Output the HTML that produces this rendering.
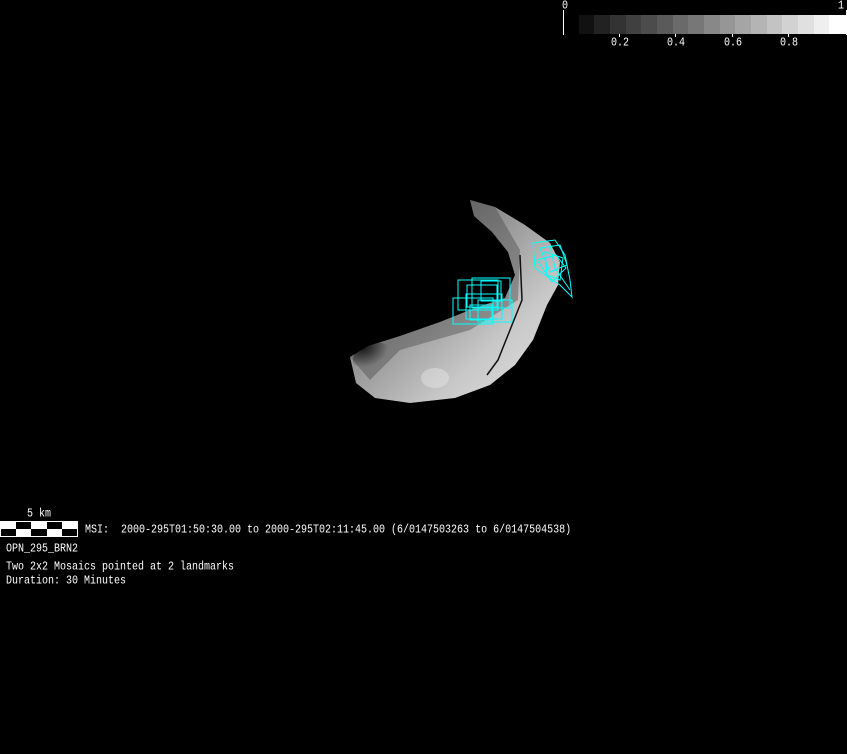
<!DOCTYPE html>
<html><head><style>
body{margin:0;background:#000;width:847px;height:754px;overflow:hidden;position:relative;font-family:"Liberation Mono",monospace;color:#fff}
.t{position:absolute;font-size:10px;white-space:pre;line-height:12px;transform:scaleY(1.2);transform-origin:0 0}
</style></head><body>
<svg width="847" height="754" style="position:absolute;left:0;top:0">
<defs>
<linearGradient id="g" x1="0" y1="0" x2="1" y2="1">
<stop offset="0" stop-color="#444"/><stop offset="0.35" stop-color="#888"/><stop offset="0.7" stop-color="#c8c8c8"/><stop offset="1" stop-color="#e6e6e6"/>
</linearGradient>
<radialGradient id="d" cx="0.2" cy="0.1" r="0.6"><stop offset="0" stop-color="#000" stop-opacity="0.9"/><stop offset="1" stop-color="#000" stop-opacity="0"/></radialGradient>
</defs>
<path d="M470,200 L495,207 L525,225 L550,243 L560,262 L558,285 L547,305 L533,340 L515,365 L490,385 L455,398 L410,403 L375,398 L356,383 L350,357 L368,346 L400,336 L440,322 L475,308 L505,298 L515,275 L508,252 L492,232 L474,216 Z" fill="url(#g)"/>
<path d="M350,357 L368,346 L400,336 L440,322 L475,308 L505,298 L515,275 L508,252 L492,232 L474,216 L470,200 L495,207 L520,250 L518,300 L470,330 L400,350 L370,380 Z" fill="#444" opacity="0.4"/>
<ellipse cx="375" cy="360" rx="22" ry="18" fill="url(#d)"/>
<ellipse cx="435" cy="378" rx="14" ry="10" fill="#eee" opacity="0.4"/>
<path d="M520,255 L522,300 L510,330 L498,360 L487,375" stroke="#111" stroke-width="1.5" fill="none"/>
<g stroke="#0ff" stroke-width="1" fill="none">
<rect x="458" y="280" width="40" height="30"/><rect x="453" y="298" width="40" height="26"/><rect x="472" y="278" width="38" height="30"/>
<rect x="466" y="294" width="36" height="25"/><rect x="478" y="300" width="34" height="22"/><rect x="467" y="285" width="30" height="22"/>
<rect x="481" y="281" width="20" height="20"/><rect x="470" y="305" width="22" height="15"/>
<path d="M533,243 L555,240 L565,255 L570,280 L572,297 L560,285 L545,275 L535,268 Z"/>
<path d="M540,248 L560,245 L567,265 L550,272 Z"/><path d="M545,252 L563,258 L560,280 L547,275 Z"/>
<path d="M537,260 L556,255 L566,268 L552,282 Z"/><path d="M550,245 L555,268 L570,290"/>
</g>
<g fill="none" stroke="#fff"><line x1="563.5" y1="10" x2="563.5" y2="35"/><line x1="846.5" y1="10" x2="846.5" y2="35"/></g>
<g shape-rendering="crispEdges">
<rect x="579" y="15" width="16" height="19" fill="#111"/><rect x="594" y="15" width="16" height="19" fill="#222"/><rect x="610" y="15" width="16" height="19" fill="#333"/>
<rect x="626" y="15" width="16" height="19" fill="#404040"/><rect x="641" y="15" width="16" height="19" fill="#4c4c4c"/><rect x="657" y="15" width="16" height="19" fill="#5a5a5a"/>
<rect x="673" y="15" width="16" height="19" fill="#6a6a6a"/><rect x="688" y="15" width="16" height="19" fill="#777"/><rect x="704" y="15" width="16" height="19" fill="#888"/>
<rect x="720" y="15" width="16" height="19" fill="#969696"/><rect x="735" y="15" width="16" height="19" fill="#a5a5a5"/><rect x="751" y="15" width="16" height="19" fill="#b4b4b4"/>
<rect x="767" y="15" width="16" height="19" fill="#c3c3c3"/><rect x="782" y="15" width="16" height="19" fill="#d2d2d2"/><rect x="798" y="15" width="16" height="19" fill="#e0e0e0"/>
<rect x="814" y="15" width="16" height="19" fill="#efefef"/><rect x="829" y="15" width="17" height="19" fill="#fff"/>
<g fill="#fff"><rect x="619" y="34" width="1" height="3"/><rect x="675" y="34" width="1" height="3"/><rect x="732" y="34" width="1" height="3"/><rect x="788" y="34" width="1" height="3"/></g>
<rect x="0" y="521" width="78" height="16" fill="#fff"/>
<g fill="#000"><rect x="16" y="522" width="15" height="7"/><rect x="47" y="522" width="15" height="7"/>
<rect x="1" y="529" width="15" height="7"/><rect x="31" y="529" width="16" height="7"/><rect x="62" y="529" width="15" height="7"/></g>
</g>
</svg>
<div class="t" style="left:562px;top:0px">0</div>
<div class="t" style="left:838px;top:0px">1</div>
<div class="t" style="left:611px;top:37px">0.2</div>
<div class="t" style="left:667px;top:37px">0.4</div>
<div class="t" style="left:724px;top:37px">0.6</div>
<div class="t" style="left:780px;top:37px">0.8</div>
<div class="t" style="left:27px;top:508px">5 km</div>
<div class="t" style="left:85px;top:524px">MSI:  2000-295T01:50:30.00 to 2000-295T02:11:45.00 (6/0147503263 to 6/0147504538)</div>
<div class="t" style="left:6px;top:543px">OPN_295_BRN2</div>
<div class="t" style="left:6px;top:561px">Two 2x2 Mosaics pointed at 2 landmarks</div>
<div class="t" style="left:6px;top:575px">Duration: 30 Minutes</div>
</body></html>
